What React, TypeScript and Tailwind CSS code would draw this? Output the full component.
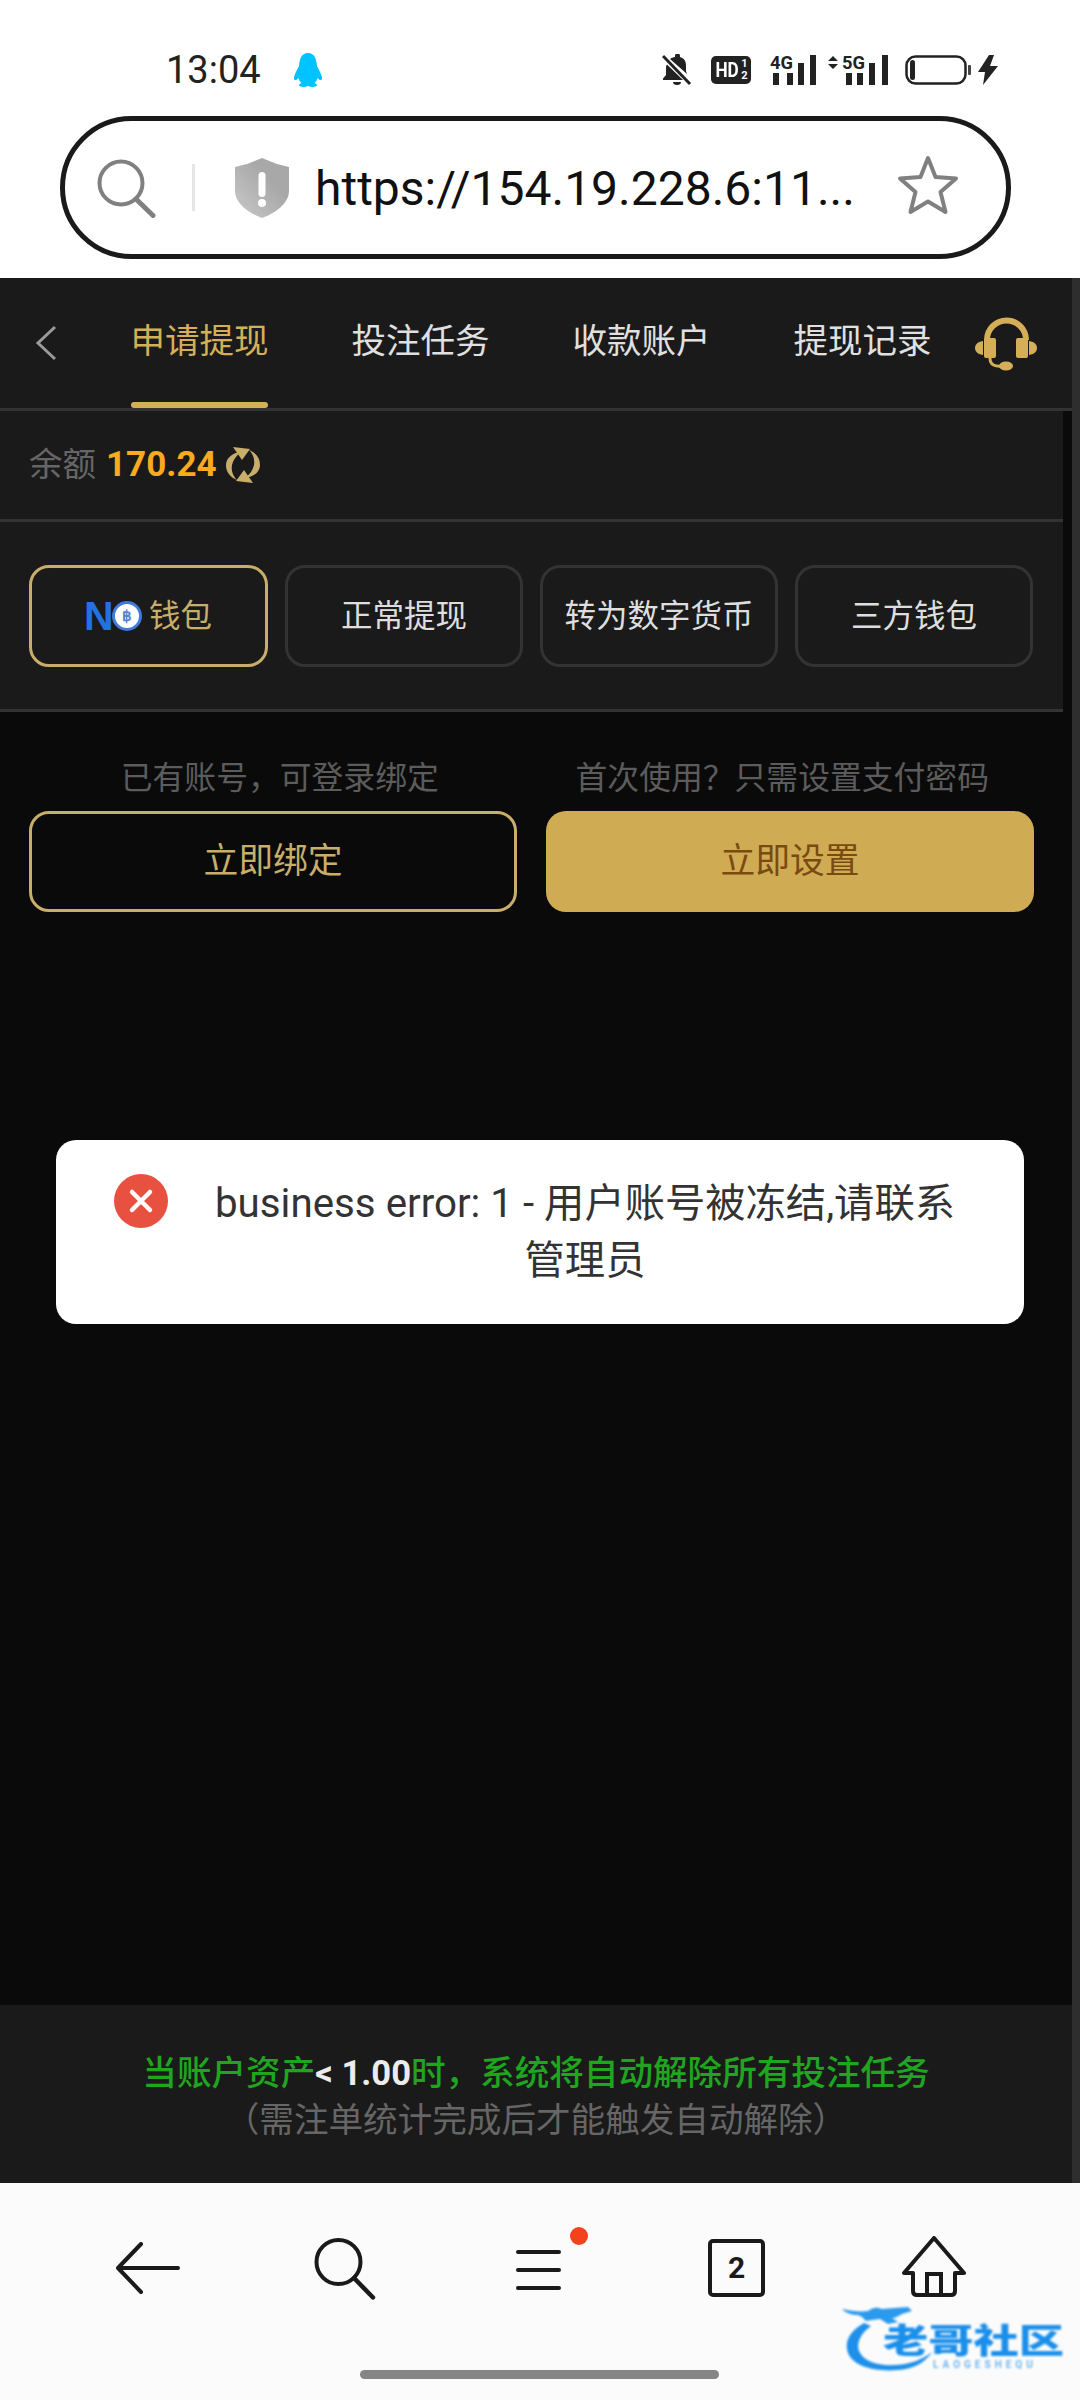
import React from "react";

function Penguin() {
  return (
    <svg width="30" height="34" viewBox="0 0 30 34" className="ml-[32px]">
      <path d="M15 0C8 0 6.500 7 6 13 4 17 .5 23 1 26c.5 2 3 1 4.500-1 .5 2 1.500 4 3 5-2 1-3 2-2 3 3 1.500 6 1 8.500 0 2.500 1 5.500 1.500 8.500 0 1-1 0-2-2-3 1.500-1 2.500-3 3-5 1.500 2 4 3 4.500 1 .5-3-3-9-5-13C23.500 7 22 0 15 0Z" fill="#00c3ff" />
    </svg>
  );
}

function Bell() {
  return (
    <svg width="30" height="32" viewBox="0 0 30 32">
      <path d="M13 2a2.500 2.500 0 0 1 5 0v1c5 1.500 6 5 6 9v5l1 3L8 5c1.500-1 3-2 5-2V2Z" fill="#222" />
      <path d="M5 10.500 21 26H1v-1.500l3-3.500v-7c0-1.500.3-2.500 1-3.500Z" fill="#222" />
      <path d="M11 28h8a4 3 0 0 1-8 0Z" fill="#222" />
      <path d="M1 2 28 30" stroke="#222" strokeWidth="3" />
    </svg>
  );
}

function HD() {
  return (
    <div className="w-[40px] h-[28px] ml-[19px] rounded-[5px] bg-[#222] flex items-center justify-center text-white font-bold">
      <span className="text-[21px] leading-none [transform:scaleX(0.82)] origin-left pl-[3px] w-[27px]">HD</span>
      <span className="flex flex-col items-center text-[11px] leading-[12px] w-[9px]">
        <span>1</span>
        <span>2</span>
      </span>
    </div>
  );
}

function Net4G() {
  return (
    <svg width="46" height="36" viewBox="0 -6 46 36" className="ml-[19px] mt-[-6px]">
      <text x="0" y="14" fontSize="19" fontWeight="700" fill="#222" fontFamily="Roboto" textLength="23" lengthAdjust="spacingAndGlyphs">4G</text>
      <rect x="3" y="18" width="6" height="12" fill="#222" />
      <rect x="17" y="18" width="6" height="12" fill="#222" />
      <rect x="28" y="8" width="6" height="22" fill="#222" />
      <rect x="40" y="0" width="6" height="30" fill="#222" />
    </svg>
  );
}

function Net5G() {
  return (
    <svg width="60" height="36" viewBox="0 -6 60 36" className="ml-[12px] mt-[-6px]">
      <path d="M0 6 5 1 10 6ZM0 9h10L5 14Z" fill="#222" />
      <text x="14" y="14" fontSize="19" fontWeight="700" fill="#222" fontFamily="Roboto" textLength="23" lengthAdjust="spacingAndGlyphs">5G</text>
      <rect x="18" y="18" width="6" height="12" fill="#222" />
      <rect x="29" y="18" width="6" height="12" fill="#222" />
      <rect x="41" y="8" width="6" height="22" fill="#222" />
      <rect x="54" y="0" width="6" height="30" fill="#222" />
    </svg>
  );
}

function Battery() {
  return (
    <svg width="66" height="30" viewBox="0 0 66 30" className="ml-[17px]">
      <rect x="1.500" y="1.500" width="59" height="27" rx="9" fill="none" stroke="#222" strokeWidth="2.500" />
      <rect x="5" y="5" width="5" height="20" rx="2.500" fill="#222" />
      <rect x="63" y="10" width="3" height="10" rx="1" fill="#444" />
    </svg>
  );
}

function Bolt() {
  return (
    <svg width="20" height="30" viewBox="0 0 20 30" className="ml-[7px]">
      <path d="M11 0 0 17h7l-2 13L20 11h-8L16 0Z" fill="#222" />
    </svg>
  );
}

function PillSearch() {
  return (
    <svg width="60" height="60" viewBox="0 0 60 60">
      <circle cx="24" cy="25" r="21.500" fill="none" stroke="#808080" strokeWidth="4" />
      <path d="M39 41 56 57.500" stroke="#808080" strokeWidth="5" strokeLinecap="round" />
    </svg>
  );
}

function Shield() {
  return (
    <svg width="54" height="60" viewBox="0 0 54 60">
      <defs>
        <linearGradient id="sh" x1="0.200" y1="0.900" x2="0.700" y2="0.400">
          <stop offset="0" stopColor="#c2c2c2" />
          <stop offset="1" stopColor="#a8a8a8" />
        </linearGradient>
      </defs>
      <path d="M27 0 42 6 54 9v24c0 12-13 22-27 27C13 55 0 45 0 33V9L12 6Z" fill="url(#sh)" />
      <rect x="23.500" y="14" width="7" height="25" rx="3.500" fill="#fff" />
      <circle cx="27" cy="45" r="4" fill="#fff" />
    </svg>
  );
}

function Star() {
  return (
    <svg width="62" height="60" viewBox="0 0 62 60" className="mb-[5px]">
      <path d="M31 3 38.500 22 59 23.500 43.500 37 48.500 57 31 46.500 13.500 57 18.500 37 3 23.500 23.500 22Z" fill="none" stroke="#808080" strokeWidth="4" strokeLinejoin="round" />
    </svg>
  );
}

function Chevron() {
  return (
    <svg width="22" height="36" viewBox="0 0 22 36">
      <path d="M20 2 3 18 20 34" fill="none" stroke="#9a9a9a" strokeWidth="3" />
    </svg>
  );
}

function Headset() {
  return (
    <svg width="62" height="56" viewBox="0 0 62 56" className="block">
      <path d="M12 24A19.500 19.500 0 0 1 51 24" fill="none" stroke="#d4af57" strokeWidth="6" />
      <rect x="9" y="22" width="12" height="20" rx="2" fill="#d4af57" />
      <rect x="41" y="22" width="12" height="20" rx="2" fill="#d4af57" />
      <path d="M8 25C2 26 0 29 0 32s2 6 8 7Z" fill="#d4af57" />
      <path d="M54 25c6 1 8 4 8 7s-2 6-8 7Z" fill="#d4af57" />
      <path d="M15 42c0 7 5 9 13 8" fill="none" stroke="#d4af57" strokeWidth="3" />
      <ellipse cx="31" cy="50" rx="7" ry="4.500" fill="#d4af57" />
    </svg>
  );
}

function Refresh() {
  return (
    <svg width="34" height="36" viewBox="0 0 34 36" className="ml-[9px]">
      <path d="M15 5C5 6 0 12 0 18c0 7 4 12 11 15-4-4-6-9-5-15 1-5 4-9 9-13Z" fill="#c9ad6a" />
      <path d="M7 0 24 2 16 13Z" fill="#c9ad6a" />
      <g transform="rotate(180 17 18)">
        <path d="M15 5C5 6 0 12 0 18c0 7 4 12 11 15-4-4-6-9-5-15 1-5 4-9 9-13Z" fill="#c9ad6a" />
        <path d="M7 0 24 2 16 13Z" fill="#c9ad6a" />
      </g>
    </svg>
  );
}

function CloseCircle() {
  return (
    <svg width="54" height="54" viewBox="0 0 54 54" className="shrink-0">
      <circle cx="27" cy="27" r="27" fill="#e8503f" />
      <path d="M18 18 36 36M36 18 18 36" stroke="#fff" strokeWidth="4.500" strokeLinecap="round" />
    </svg>
  );
}

function WalletTab() {
  return (
    <div className="h-[102px] rounded-[20px] border-[3px] border-[#c9ad6a] flex items-center pl-[52px]">
      <span className="text-[41px] leading-none font-black text-[#2272e0] [font-family:'Liberation_Sans',sans-serif] w-[28px]">N</span>
      <span className="w-[30px] h-[30px] rounded-full bg-white border-[3px] border-[#3f7bd8] flex items-center justify-center text-[15px] font-bold leading-none text-[#4f86d0]">฿</span>
      <span className="ml-[7px] pt-[2px] text-[31.500px] text-[#c9ad6a]">钱包</span>
    </div>
  );
}

function PlainTab({ label }: { label: string }) {
  return (
    <div className="h-[102px] pt-[2px] rounded-[20px] border-[3px] border-[#333] flex items-center justify-center text-[31.500px] text-[#dedede]">
      {label}
    </div>
  );
}

function HeaderTab({ label, active }: { label: string; active?: boolean }) {
  return (
    <div className={active ? "relative h-full w-[137px] flex items-center justify-center text-[#d4af57] pb-[3px] whitespace-nowrap" : "h-full w-[137px] flex items-center justify-center text-[#e0e0e0] pb-[3px] whitespace-nowrap"}>
      {label}
      {active ? <span className="absolute left-0 right-0 bottom-0 h-[6px] rounded-[3px] bg-[#d4af57]" /> : null}
    </div>
  );
}

function Watermark() {
  return (
    <div className="absolute left-[842px] top-[2305px] w-[222px] h-[68px] blur-[0.8px]">
      <svg width="110" height="68" viewBox="0 0 110 68" className="absolute left-0 top-0">
        <path d="M22 18C8 26 2 36 6 48c5 13 26 19 50 17 14-1 26-6 34-18-10 8-22 12-36 13-18 1-32-3-37-14-3-8 2-18 12-25Z" fill="#1e90ea" />
        <path d="M0 4c10 2 18 3 26 2 6-4 8-4 14-2 8-1 16-1 26-2l4 4-10 3c-4 2-6 4-10 4l6 4-10 2-8-5-8 1-6 1-4-4-4-2C10 10 4 8 0 4Z" fill="#2b9aec" />
      </svg>
      <span className="absolute left-[41px] top-[16px] text-[34px] leading-[40px] font-black text-[#1a8fea] whitespace-nowrap origin-left [transform:scaleX(1.33)]">老哥社区</span>
      <span className="absolute left-[91px] top-[54px] text-[10px] leading-[12px] text-[#6fb6ec] font-bold tracking-[4px] whitespace-nowrap">LAOGESHEQU</span>
    </div>
  );
}

export default function App() {
  return (
    <div className="relative w-[1080px] h-[2400px] overflow-hidden flex flex-col bg-white [font-family:Roboto,'Noto_Sans_CJK_SC',sans-serif]">
      <div className="h-[278px] bg-white shrink-0 pt-[52px]">
        <div className="h-[36px] flex items-center pl-[166px] pr-[82px]">
          <span className="text-[38px] leading-[36px] text-[#222]">13:04</span>
          <Penguin />
          <div className="flex-1" />
          <Bell />
          <HD />
          <Net4G />
          <Net5G />
          <Battery />
          <Bolt />
        </div>
        <div className="mt-[28px] ml-[60px] w-[951px] h-[143px] rounded-full border-[5px] border-[#1a1a1a] flex items-center pl-[32px] pr-[47px]">
          <PillSearch />
          <span className="w-[3px] h-[47px] bg-[#e6e6e6] ml-[35px]" />
          <span className="ml-[40px]"><Shield /></span>
          <span className="ml-[26px] pt-[2px] w-[534px] text-[48px] leading-none text-[#111] whitespace-nowrap">https://154.19.228.6:11...</span>
          <div className="flex-1" />
          <Star />
        </div>
      </div>

      <div className="flex-1 flex min-h-0">
        <div className="w-[1072px] flex flex-col bg-[#0a0a0a]">
          <div className="h-[133px] shrink-0 bg-[#1a1a1a] border-b-[3px] border-[#333] flex items-center pl-[35px] text-[34.500px]">
            <Chevron />
            <div className="h-full ml-[74px] flex gap-[84px]">
              <HeaderTab label="申请提现" active />
              <HeaderTab label="投注任务" />
              <HeaderTab label="收款账户" />
              <HeaderTab label="提现记录" />
            </div>
            <span className="ml-[44px] pt-[2px]"><Headset /></span>
          </div>

          <div className="w-[1063px] h-[111px] shrink-0 bg-[#1a1a1a] border-b-[3px] border-[#333] flex items-center pl-[29px]">
            <span className="text-[33.500px] text-[#666]">余额</span>
            <span className="ml-[10px] text-[35px] font-bold text-[#fba91e]">170.24</span>
            <Refresh />
          </div>

          <div className="w-[1063px] h-[190px] shrink-0 bg-[#1a1a1a] border-b-[3px] border-[#333] pl-[29px] pt-[43px] grid grid-cols-[239px_238px_238px_238px] gap-[17px] content-start">
            <WalletTab />
            <PlainTab label="正常提现" />
            <PlainTab label="转为数字货币" />
            <PlainTab label="三方钱包" />
          </div>

          <div className="pt-[46px] pl-[36px] pr-[46px] grid grid-cols-2 gap-[15px] text-[31.800px] leading-[40px] text-[#5c5c5c] text-center">
            <span>已有账号，可登录绑定</span>
            <span>首次使用？只需设置支付密码</span>
          </div>
          <div className="mt-[13px] pl-[29px] pr-[38px] grid grid-cols-2 gap-[29px] text-[34.800px]">
            <div className="h-[101px] rounded-[20px] border-[3px] border-[#c9ad6a] flex items-center justify-center text-[#c9ad6a]">立即绑定</div>
            <div className="h-[101px] rounded-[20px] bg-[#cfac54] flex items-center justify-center text-[#7a4a10]">立即设置</div>
          </div>

          <div className="flex-1" />

          <div className="h-[178px] shrink-0 bg-[#1a1a1a] flex flex-col items-center pt-[45px] text-[34.600px] leading-[47px]">
            <div className="font-medium text-[#1fa51f] whitespace-nowrap">
              当账户资产<span className="font-bold text-[#ececec]">{"< 1.00"}</span>时，系统将自动解除所有投注任务
            </div>
            <div className="text-[#666] whitespace-nowrap">（需注单统计完成后才能触发自动解除）</div>
          </div>
        </div>
        <div className="w-[8px] bg-[#2e2e2e]" />
      </div>

      <div className="h-[217px] shrink-0 bg-[#fbfbfb] relative">
        <div className="pt-[53px] flex items-start pl-[116px]">
          <svg width="64" height="52" viewBox="0 0 64 52" className="shrink-0 mt-[6px]">
            <path d="M62 26H3M25 2 2 26 25 50" fill="none" stroke="#1a1a1a" strokeWidth="4" strokeLinecap="round" strokeLinejoin="round" />
          </svg>
          <svg width="62" height="62" viewBox="0 0 62 62" className="ml-[134px] shrink-0 mt-[2px]">
            <circle cx="24.500" cy="24" r="22" fill="none" stroke="#1a1a1a" strokeWidth="4" />
            <path d="M40 40 59 59.500" stroke="#1a1a1a" strokeWidth="4.500" strokeLinecap="round" />
          </svg>
          <svg width="45" height="40" viewBox="0 0 45 40" className="ml-[140px] shrink-0 mt-[14px]">
            <path d="M2 2H43M2 20H43M2 38H43" stroke="#1a1a1a" strokeWidth="4" strokeLinecap="round" />
          </svg>
          <div className="ml-[147px] mt-[3px] w-[57px] h-[58px] shrink-0 rounded-[5px] border-[4px] border-[#1a1a1a] flex items-center justify-center text-[30px] leading-none font-bold text-[#1a1a1a]">2</div>
          <svg width="64" height="62" viewBox="0 0 64 62" className="ml-[137px] shrink-0">
            <path d="M32 2 62 37H53V55Q53 59 49 59H15Q11 59 11 55V37H2Z" fill="none" stroke="#1a1a1a" strokeWidth="4" strokeLinejoin="round" />
            <path d="M25 59V38H39V59" fill="none" stroke="#1a1a1a" strokeWidth="4" />
          </svg>
        </div>
        <span className="absolute left-[570px] top-[44px] w-[18px] h-[18px] rounded-full bg-[#f4411e]" />
        <span className="absolute left-[360px] top-[187px] w-[359px] h-[9px] rounded-full bg-[#858585]" />
      </div>

      <Watermark />

      <div className="absolute left-[56px] top-[1140px] w-[968px] h-[184px] rounded-[20px] bg-white flex items-start pl-[58px] pt-[34px]">
        <CloseCircle />
        <div className="ml-[42px] mt-[1px] w-[750px] text-center text-[40.300px] leading-[57px] text-[#333]">
          business error: 1 - 用户账号被冻结,请联系管理员
        </div>
      </div>
    </div>
  );
}
